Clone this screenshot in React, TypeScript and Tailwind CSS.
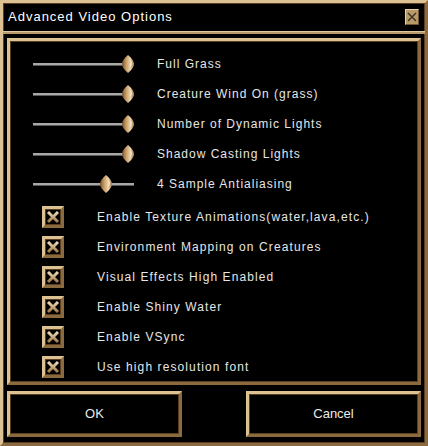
import React from 'react'

const sliders = [
  {label: 'Full Grass', value: 100},
  {label: 'Creature Wind On (grass)', value: 100},
  {label: 'Number of Dynamic Lights', value: 100},
  {label: 'Shadow Casting Lights', value: 100},
  {label: '4 Sample Antialiasing', value: 75},
]

const checks = [
  'Enable Texture Animations(water,lava,etc.)',
  'Environment Mapping on Creatures',
  'Visual Effects High Enabled',
  'Enable Shiny Water',
  'Enable VSync',
  'Use high resolution font',
]

const gold =
  'border-[3px] border-t-[#dcc292] border-l-[#dcc292] border-b-[#8a6a3e] border-r-[#8a6a3e] shadow-[inset_0_0_0_1px_#5a4020]'

const Knob = () => (
  <svg width="12" height="18" viewBox="0 0 12 18">
    <defs>
      <linearGradient id="kg" x1="0" y1="0" x2="1" y2="0">
        <stop offset="0" stopColor="#74502a" />
        <stop offset="0.35" stopColor="#c89e66" />
        <stop offset="0.7" stopColor="#ead6b0" />
        <stop offset="1" stopColor="#a07646" />
      </linearGradient>
    </defs>
    <path d="M6 0 C9.5 3 12 6 12 9 C12 12 9.5 15 6 18 C2.5 15 0 12 0 9 C0 6 2.5 3 6 0Z" fill="url(#kg)" />
    <path d="M8.5 6 L9.5 8 L8.5 11" stroke="#fff4e0" strokeWidth="1" fill="none" opacity="0.8" />
  </svg>
)

const Slider = ({value}: {value: number}) => (
  <div className="relative w-[101px] h-[18px]">
    <div className="absolute left-0 right-0 top-[8px] h-[3px] bg-[#a8a8a8] border-b border-[#5a5a5a]" />
    <div className="absolute top-0" style={{left: `${(value / 100) * 89}px`}}>
      <Knob />
    </div>
  </div>
)

const CheckBox = () => (
  <div className={`w-[22px] h-[22px] bg-black flex items-center justify-center ${gold}`}>
    <svg width="14" height="14" viewBox="0 0 14 14">
      <defs>
        <linearGradient id="xg" x1="0" y1="0" x2="0" y2="1">
          <stop offset="0" stopColor="#f0dcb4" />
          <stop offset="1" stopColor="#a07848" />
        </linearGradient>
      </defs>
      <path d="M2 2 L12 12 M12 2 L2 12" stroke="url(#xg)" strokeWidth="3" />
    </svg>
  </div>
)

const text = "font-['Liberation_Sans',Arial,sans-serif]"

export default function App() {
  return (
    <div className={`w-[428px] h-[446px] bg-black flex flex-col ${gold} ${text}`}>
      <div className="h-[28px] flex items-center justify-between pl-[5px] pr-[6px]">
        <span className="text-[13px] tracking-[1px] text-white">Advanced Video Options</span>
        <div className="w-[14px] h-[16px] bg-[#b89a68] border border-t-[#e6d2a6] border-l-[#e6d2a6] border-b-[#6e5430] border-r-[#6e5430] flex items-center justify-center">
          <svg width="10" height="10" viewBox="0 0 10 10">
            <path d="M1 1 L9 9 M9 1 L1 9" stroke="#3e3428" strokeWidth="1.5" />
          </svg>
        </div>
      </div>
      <div className="h-[3px] bg-[#b8996a] border-t border-[#e0c898]" />
      <div className="flex flex-col px-[4px] pt-[4px]">
        <div className={`h-[347px] flex flex-col pt-[8px] ${gold}`}>
          {sliders.map((s) => (
            <div key={s.label} className="h-[30px] flex items-center pl-[23px]">
              <Slider value={s.value} />
              <span className="ml-[23px] text-[12px] tracking-[1px] text-[#e6e6e6]">{s.label}</span>
            </div>
          ))}
          <div className="h-[4px]" />
          {checks.map((c) => (
            <div key={c} className="h-[30px] flex items-center pl-[32px]">
              <CheckBox />
              <span className="ml-[33px] text-[12px] tracking-[1.1px] text-[#e6e6e6]">{c}</span>
            </div>
          ))}
        </div>
        <div className="mt-[6px] flex justify-between">
          <button className={`w-[175px] h-[46px] bg-black text-[13px] text-[#ececec] ${gold}`}>OK</button>
          <button className={`w-[175px] h-[46px] bg-black text-[13px] text-[#ececec] ${gold}`}>Cancel</button>
        </div>
      </div>
    </div>
  )
}
